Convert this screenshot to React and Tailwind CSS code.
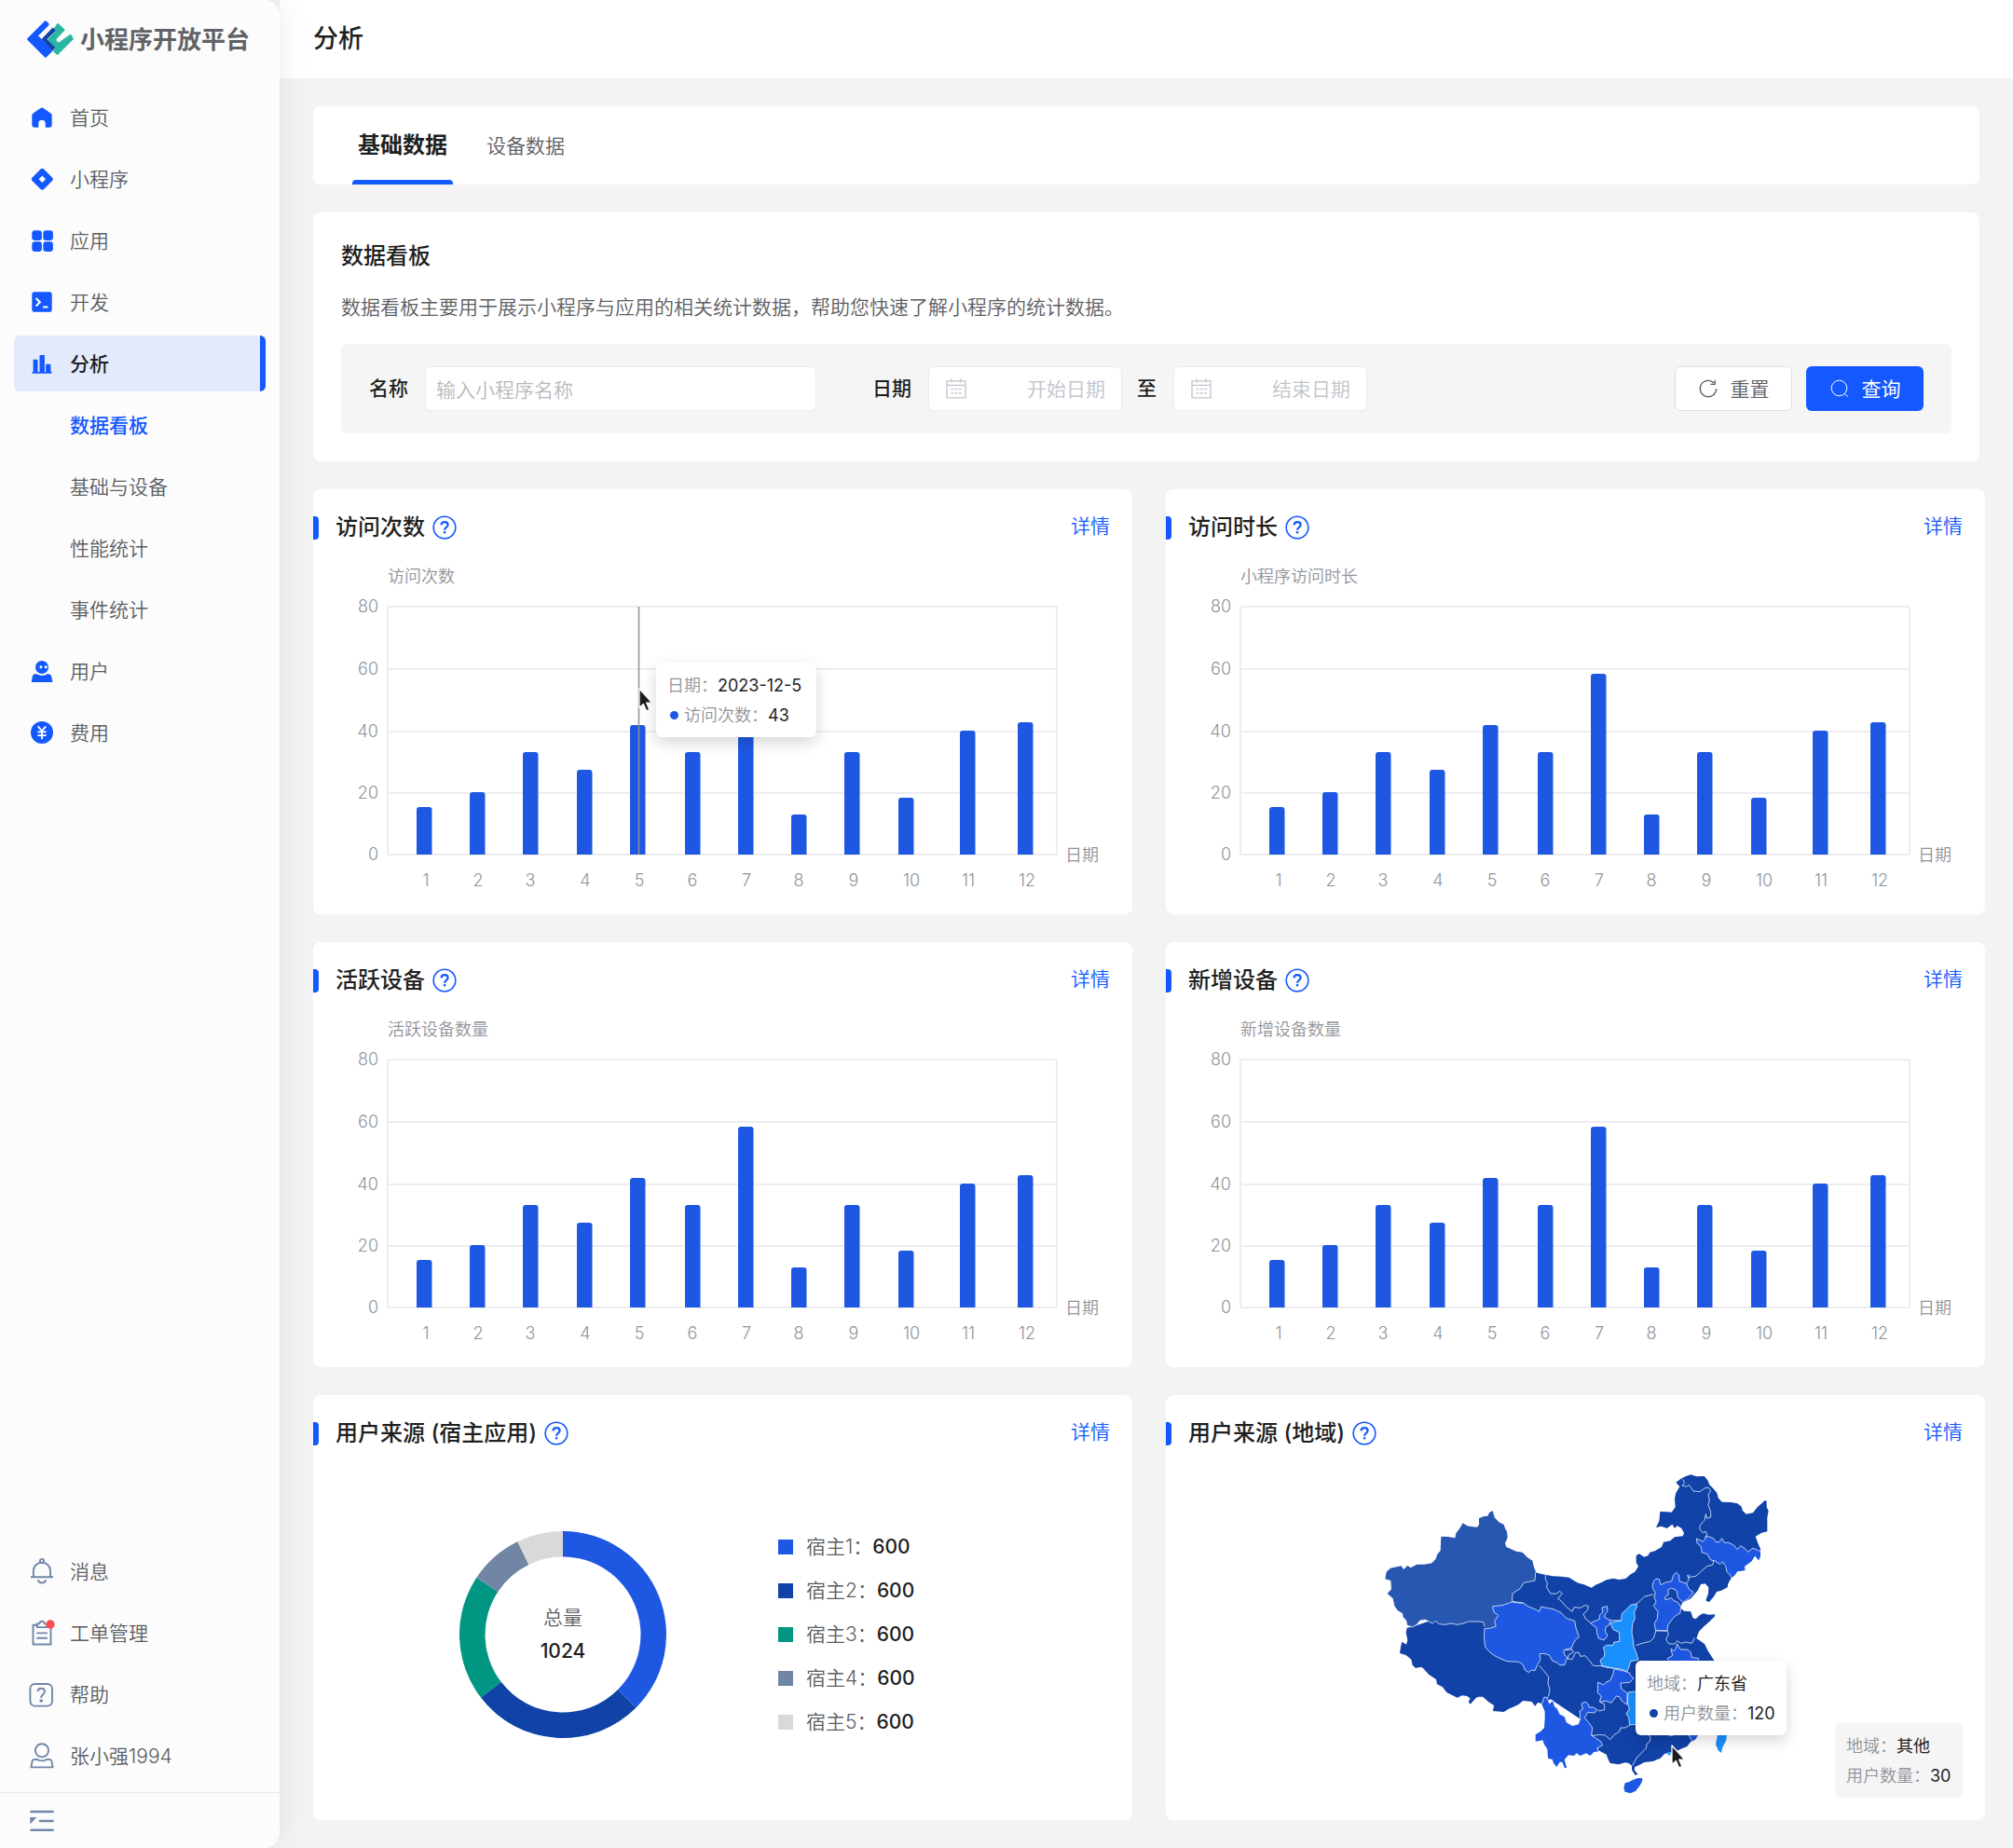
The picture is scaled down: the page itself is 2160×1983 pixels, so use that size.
import React from "react";

const ICONS = {
  home: (
    <path
      fill="currentColor"
      d="M13.6 4.9a2.4 2.4 0 0 1 2.8 0l8 5.7c.8.6 1.3 1.5 1.3 2.5v9.7a2.9 2.9 0 0 1-2.9 2.9h-4.1v-4.2a3.7 3.7 0 0 0-7.4 0v4.2H7.2a2.9 2.9 0 0 1-2.9-2.9v-9.7c0-1 .5-1.9 1.3-2.5z"
    />
  ),
  mini: (
    <path
      fill="currentColor"
      fillRule="evenodd"
      d="M13.3 4.7a2.8 2.8 0 0 1 4 0l8.500 8.500a2.800 2.800 0 0 1 0 4l-8.500 8.500a2.800 2.800 0 0 1-4 0l-8.500-8.500a2.800 2.800 0 0 1 0-4zM15.300 11.500l-3.700 3.700 3.700 3.700 3.700-3.700z"
    />
  ),
  apps: (
    <g fill="currentColor">
      <rect x="4.3" y="4.3" width="10.6" height="10.6" rx="3.2" />
      <rect x="16.3" y="4.3" width="10.6" height="10.6" rx="3.2" />
      <rect x="4.3" y="16.3" width="10.6" height="10.6" rx="3.2" />
      <rect x="16.3" y="16.3" width="10.6" height="10.6" rx="3.2" />
    </g>
  ),
  dev: (
    <g>
      <rect x="4.3" y="4.3" width="21.4" height="21.4" rx="2.8" fill="currentColor" />
      <path d="M8.6 11l4.3 4.3-4.3 4.2M16 20.500h5.400" fill="none" stroke="#fff" strokeWidth="2" />
    </g>
  ),
  chart: (
    <g fill="currentColor">
      <rect x="5.6" y="10.7" width="4.9" height="14" rx="0.8" />
      <rect x="12.5" y="6" width="5.4" height="19" rx="0.8" />
      <rect x="19.1" y="15.7" width="5.3" height="9" rx="0.8" />
      <rect x="4.5" y="24" width="21" height="1.7" rx="0.5" />
    </g>
  ),
  user: (
    <g>
      <circle cx="15" cy="11" r="7" fill="currentColor" />
      <circle cx="13.9" cy="10.7" r="1.5" fill="#fff" />
      <circle cx="19.2" cy="10.7" r="1.5" fill="#fff" />
      <path d="M7.8 18.3h1.7c1.7 1.1 3.5 1.5 5.5 1.5s3.8-.4 5.5-1.5h1.7c1.6 0 2.7.9 3 2.4l1.2 6.3H3.7l1.1-6.3c.3-1.5 1.4-2.4 3-2.4z" fill="currentColor" />
    </g>
  ),
  fee: (
    <g>
      <circle cx="15" cy="15" r="12" fill="currentColor" />
      <path d="M10.8 8.3l4.200 5 4.200-5M15 13.300v9M10.300 14.400h9.400M10.300 18.100h9.400" fill="none" stroke="#fff" strokeWidth="1.8" />
    </g>
  ),
  bell: (
    <g fill="none" stroke="currentColor" strokeWidth="1.9">
      <path d="M3 21.300h24" />
      <path d="M5.9 21.3v-6.8C5.9 9.3 10 5.8 15 5.8s9.1 3.5 9.1 8.7v6.8" />
      <circle cx="15" cy="4" r="2.1" />
      <path d="M10.8 24.2c.5 2 2.1 3.3 4.2 3.3s3.7-1.3 4.2-3.3" />
    </g>
  ),
  ticket: (
    <g>
      <g fill="none" stroke="currentColor" strokeWidth="1.9">
        <path d="M9.300 6.700H5.500v20.800h19V8" />
        <path d="M9.8 5.4h2.4c.3-1.6 1.3-2.7 2.8-2.7s2.5 1.1 2.8 2.7h2.4v3.7H9.800z" />
        <path d="M9.300 15.400h11.700M9.300 20.800h11.700" />
      </g>
      <circle cx="24" cy="6" r="4.7" fill="#ff4d4f" />
    </g>
  ),
  help: (
    <g fill="none" stroke="currentColor" strokeWidth="1.9">
      <rect x="2.4" y="4" width="23.6" height="23.6" rx="5" />
      <path d="M10.5 12.2c.1-2.1 1.5-3.5 3.7-3.5s3.7 1.3 3.7 3.3c0 1.7-1 2.5-2 3.4-1.1.9-1.7 1.6-1.7 3.2v.5" />
      <circle cx="14.2" cy="22" r="0.9" fill="currentColor" />
    </g>
  ),
  person: (
    <g fill="none" stroke="currentColor" strokeWidth="1.9">
      <circle cx="15" cy="9.3" r="7.1" />
      <path d="M3.4 27.4l1.2-6.6c.2-1.2 1-1.8 2.2-1.8h3.1c1.5.9 3.2 1.4 5.1 1.4s3.6-.5 5.1-1.4h3.1c1.2 0 2 .6 2.2 1.8l1.2 6.6z" />
    </g>
  ),
  fold: (
    <g>
      <path d="M3.500 5h23M13 15h13.500M3.500 24.700h23" stroke="currentColor" strokeWidth="2.6" strokeLinecap="round" />
      <path d="M2.300 11h7l-7 7.500z" fill="currentColor" />
    </g>
  ),
};

function Icon({ name }) {
  return (
    <svg viewBox="0 0 30 30" className="h-[30px] w-[30px] shrink-0" aria-hidden="true">
      {ICONS[name]}
    </svg>
  );
}

function NavItem({ icon, label, active, muted }) {
  return (
    <a
      href="#"
      className={
        "relative flex h-[60px] items-center gap-[15px] overflow-hidden rounded-md pl-[15px] text-[21px] " +
        (active ? "bg-[#e3eafc] font-medium text-[#1f1f1f]" : "font-[350] text-[#5b5d63]")
      }
    >
      <span className={muted ? "text-[#7186a8]" : "text-[#1359ff]"}>
        <Icon name={icon} />
      </span>
      <span className="pt-[2px]">{label}</span>
      {active && <span className="absolute inset-y-0 right-0 w-[6px] bg-[#1359ff]" />}
    </a>
  );
}

function SubItem({ label, active }) {
  return (
    <a
      href="#"
      className={
        "flex h-[60px] items-center pt-[2px] pl-[60px] text-[21px] " +
        (active ? "font-medium text-[#1359ff]" : "font-[350] text-[#5b5d63]")
      }
    >
      {label}
    </a>
  );
}

function Logo() {
  return (
    <svg viewBox="84 62 160 132" className="h-[44px] w-[53px]" aria-hidden="true" strokeLinejoin="round">
      <path d="M92 128L147 73l7 7-37 37 48 48-18 18z" fill="#1359ff" stroke="#1359ff" strokeWidth="9" />
      <path d="M187 79l20 19-24 25c-5 5-5 9 0 14s9 5 14 0l31-22 7 12-50 50-11-11 8-8-25-29 27-27-7-9z" fill="#2ab7a2" stroke="#2ab7a2" strokeWidth="5" />
      <path d="M170 90l11 10-29 28 27 28-9 9-36-37z" fill="#1042a8" />
    </svg>
  );
}

function Sidebar() {
  return (
    <aside className="z-10 flex w-[300px] shrink-0 flex-col rounded-r-2xl bg-[#fcfcfc] shadow-[0_0_36px_rgba(0,0,0,0.08)]">
      <div className="flex h-[84px] items-center gap-[5px] pl-7 text-[26px] font-bold text-[#606266]">
        <Logo />
        小程序开放平台
      </div>
      <nav className="flex flex-col gap-[6px] px-[15px] pt-3" aria-label="主导航">
        <NavItem icon="home" label="首页" />
        <NavItem icon="mini" label="小程序" />
        <NavItem icon="apps" label="应用" />
        <NavItem icon="dev" label="开发" />
        <NavItem icon="chart" label="分析" active />
        <SubItem label="数据看板" active />
        <SubItem label="基础与设备" />
        <SubItem label="性能统计" />
        <SubItem label="事件统计" />
        <NavItem icon="user" label="用户" />
        <NavItem icon="fee" label="费用" />
      </nav>
      <nav className="mt-auto flex flex-col gap-[6px] px-[15px] pb-[9px]" aria-label="账户">
        <NavItem icon="bell" label="消息" muted />
        <NavItem icon="ticket" label="工单管理" muted />
        <NavItem icon="help" label="帮助" muted />
        <NavItem icon="person" label="张小强1994" muted />
      </nav>
      <div className="flex h-[60px] items-center border-t border-[#e8e8e8] pl-[30px]">
        <button type="button" aria-label="收起菜单" className="text-[#7186a8]">
          <Icon name="fold" />
        </button>
      </div>
    </aside>
  );
}

function CalendarIcon() {
  return (
    <svg viewBox="0 0 24 24" className="h-6 w-6 shrink-0 text-[#c0c4cc]" fill="none" stroke="currentColor" strokeWidth="1.3" aria-hidden="true">
      <path d="M2 3.800h20v18H2zM2 8.400h20M7 1.500v4M17 1.500v4" />
      <path d="M6.500 12.600h3M10.700 12.600h3M14.900 12.600h3M6.500 16.800h3M10.700 16.800h3M14.900 16.800h3" />
    </svg>
  );
}

function DateField({ label, placeholder }) {
  return (
    <div className="flex h-12 w-[208px] items-center rounded-md border border-[#ebebeb] bg-white px-[17px]">
      <CalendarIcon />
      <input
        type="text"
        aria-label={label}
        placeholder={placeholder}
        className="w-full min-w-0 pt-[2px] text-right text-[21px] font-[350] outline-none placeholder:text-[#c0c4cc]"
      />
    </div>
  );
}

function FilterBar() {
  return (
    <form className="mt-6 flex h-24 items-center rounded-md bg-[#f5f5f5] px-[30px] text-[21px]">
      <label htmlFor="app-name" className="mr-[18px] font-medium text-[#1f1f1f]">
        名称
      </label>
      <input
        id="app-name"
        type="text"
        placeholder="输入小程序名称"
        className="h-12 w-[420px] rounded-md border border-[#ebebeb] bg-white px-[11px] pt-[2px] font-[350] outline-none placeholder:text-[#b8b8b8]"
      />
      <span className="mr-[18px] ml-[60px] font-medium text-[#1f1f1f]">日期</span>
      <DateField label="开始日期" placeholder="开始日期" />
      <span className="mr-[18px] ml-4 font-medium text-[#1f1f1f]">至</span>
      <DateField label="结束日期" placeholder="结束日期" />
      <button
        type="button"
        className="ml-auto flex h-12 w-[126px] items-center justify-center gap-[13px] rounded-md border border-[#dcdfe6] bg-white font-[350] text-[#5b5d63]"
      >
        <svg viewBox="0 0 22 22" className="h-[22px] w-[22px]" fill="none" stroke="currentColor" strokeWidth="1.3" aria-hidden="true">
          <path d="M19.600 11a8.700 8.700 0 1 1-2.400-6" />
          <path d="M18.200 1.800v4.600h-4.800" />
        </svg>
        <span className="pt-[2px]">重置</span>
      </button>
      <button
        type="button"
        className="ml-[15px] flex h-12 w-[126px] items-center justify-center gap-[13px] rounded-md bg-[#1359ff] text-white"
      >
        <svg viewBox="0 0 22 22" className="h-[22px] w-[22px]" fill="none" stroke="currentColor" strokeWidth="1" aria-hidden="true">
          <circle cx="10.5" cy="10.5" r="8.3" />
          <path d="M16.300 16.300l3.500 3.500" />
        </svg>
        <span className="pt-[2px]">查询</span>
      </button>
    </form>
  );
}

function Card({ title, children }) {
  return (
    <section className="relative rounded-lg bg-white">
      <header className="flex h-[82px] items-center pr-6">
        <span className="h-[25px] w-[6px] rounded-r bg-[#1359ff]" />
        <h2 className="ml-[18px] text-2xl font-medium text-[#1f1f1f]">{title}</h2>
        <button type="button" aria-label={title + "说明"} className="ml-2 text-[#1359ff]">
          <svg viewBox="0 0 26 26" className="block h-[26px] w-[26px]" fill="none" aria-hidden="true">
            <circle cx="13" cy="13" r="11.8" stroke="currentColor" strokeWidth="1.6" />
            <path d="M9.5 10.4c.1-2.1 1.5-3.3 3.6-3.3s3.5 1.2 3.5 3c0 1.4-.7 2.1-1.7 2.8-1.2.8-1.8 1.4-1.8 2.9" stroke="currentColor" strokeWidth="2.2" />
            <rect x="11.9" y="17" width="2.4" height="2.4" rx="0.6" fill="currentColor" />
          </svg>
        </button>
        <a href="#" className="ml-auto pb-[2px] text-[21px] font-[350] text-[#1359ff]">
          详情
        </a>
      </header>
      {children}
    </section>
  );
}

const BARS = [
  { x: 111, h: 51, label: "1", lx: 121 },
  { x: 168, h: 67, label: "2", lx: 177 },
  { x: 225, h: 110, label: "3", lx: 233 },
  { x: 283, h: 91, label: "4", lx: 292 },
  { x: 340, h: 139, label: "5", lx: 350 },
  { x: 399, h: 110, label: "6", lx: 407 },
  { x: 456, h: 194, label: "7", lx: 465 },
  { x: 513, h: 43, label: "8", lx: 521 },
  { x: 570, h: 110, label: "9", lx: 580 },
  { x: 628, h: 61, label: "10", lx: 642 },
  { x: 694, h: 133, label: "11", lx: 703 },
  { x: 756, h: 142, label: "12", lx: 766 },
];

const TICKS = [
  { value: 80, y: 126 },
  { value: 60, y: 193 },
  { value: 40, y: 260 },
  { value: 20, y: 326 },
  { value: 0, y: 392 },
];

function BarChart({ name, pointer }) {
  return (
    <svg viewBox="0 82 879 374" className="block w-full text-[18px] font-[350]" role="img" aria-label={name}>
      <g fill="#909399">
        <text x="80" y="100">{name}</text>
        {TICKS.map((t) => (
          <text key={t.value} x="70" y={t.y + 6} textAnchor="end">
            {t.value}
          </text>
        ))}
        {BARS.map((b) => (
          <text key={b.label} x={b.lx} y="426" textAnchor="middle">
            {b.label}
          </text>
        ))}
        <text x="807" y="399">日期</text>
      </g>
      <g stroke="#ededef" strokeWidth="2">
        {TICKS.map((t) => (
          <path key={t.value} d={`M80 ${t.y}H798`} />
        ))}
        <path d="M80 126V392M798 126V392" />
      </g>
      {BARS.map((b) => (
        <path
          key={b.label}
          d={`M${b.x} 392V${392 - b.h + 3}q0-3 3-3h10.500q3 0 3 3V392z`}
          fill="#1e58e2"
        />
      ))}
      {pointer && <path d="M349.500 126V392" stroke="#8b8e95" strokeWidth="1.5" />}
    </svg>
  );
}

function Cursor() {
  return (
    <svg viewBox="0 0 18 28" className="h-7 w-[18px]" aria-hidden="true">
      <path d="M2 2v20.500l4.400-4 3.200 7.300 3.300-1.400-3.200-7.200h6.100z" fill="#1b1c1e" stroke="#fff" strokeWidth="1.3" strokeLinejoin="round" />
    </svg>
  );
}

function TipRows({ rows }) {
  return (
    <dl className="flex flex-col gap-1">
      {rows.map((r) => (
        <div key={r.name} className="flex h-7 items-center">
          {r.dot && (
            <span className={"mr-[6px] ml-[3px] h-[9px] w-[9px] rounded-full " + r.dot} />
          )}
          <dt className="font-[350] text-[#909399]">{r.name}：</dt>
          <dd className="font-normal text-[#1f1f1f]">{r.value}</dd>
        </div>
      ))}
    </dl>
  );
}

const SOURCES = [
  { name: "宿主1", from: 0, to: 135, fill: "#1e58e2", swatch: "bg-[#1e58e2]" },
  { name: "宿主2", from: 135, to: 232.5, fill: "#1042a8", swatch: "bg-[#1042a8]" },
  { name: "宿主3", from: 232.5, to: 303.5, fill: "#009682", swatch: "bg-[#009682]" },
  { name: "宿主4", from: 303.5, to: 334, fill: "#7186a5", swatch: "bg-[#7186a5]" },
  { name: "宿主5", from: 334, to: 360, fill: "#d9d9d9", swatch: "bg-[#d9d9d9]" },
];

function ringPath(from, to) {
  const at = (deg, r) => {
    const a = (deg * Math.PI) / 180;
    return `${(112 + r * Math.sin(a)).toFixed(2)} ${(112 - r * Math.cos(a)).toFixed(2)}`;
  };
  return `M${at(from, 111)}A111 111 0 0 1 ${at(to, 111)}L${at(to, 83.5)}A83.5 83.5 0 0 0 ${at(from, 83.5)}z`;
}

function SourceChart() {
  return (
    <div className="flex h-[374px] items-center pb-[25px] pl-[156px]">
      <div className="relative h-56 w-56">
        <svg viewBox="0 0 224 224" className="h-full w-full" role="img" aria-label="用户来源分布">
          {SOURCES.map((s) => (
            <path key={s.name} d={ringPath(s.from, s.to)} fill={s.fill} />
          ))}
        </svg>
        <div className="absolute inset-0 flex flex-col items-center justify-center gap-1 text-[21px] leading-8">
          <span className="font-[350] text-[#5b5d63]">总量</span>
          <span className="font-medium text-[#1f1f1f]">1024</span>
        </div>
      </div>
      <ul className="ml-[119px] flex flex-col gap-[15px] text-[21px]">
        {SOURCES.map((s) => (
          <li key={s.name} className="flex h-8 items-center">
            <span className={"mr-[14px] h-4 w-4 " + s.swatch} />
            <span className="font-[350] text-[#5b5d63]">{s.name}：</span>
            <span className="font-medium text-[#1f1f1f]">600</span>
          </li>
        ))}
      </ul>
    </div>
  );
}

const MAINLAND =
  "M562 382L578 386 600 391 618 394 645 395 670 398 685 408 700 416 718 421 742 431 758 421 775 414 790 406 812 401 830 405 852 402 868 388 882 380 893 362 886 350 886 328 895 322 912 332 924 328 930 317 948 312 968 300 974 284 996 280 1010 268 1036 265 1040 255 1032 240 1018 232 1010 240 1002 227 985 240 966 233 950 238 960 216 963 186 985 187 1000 188 1012 172 1010 145 1014 125 1026 106 1014 92 1030 80 1046 72 1062 67 1080 73 1105 72 1116 85 1122 100 1134 112 1146 126 1150 142 1162 155 1190 156 1212 160 1225 170 1228 182 1240 194 1262 190 1276 172 1290 160 1300 150 1306 152 1306 172 1312 184 1308 205 1308 250 1290 254 1270 266 1278 288 1286 306 1286 330 1280 342 1268 328 1258 345 1235 362 1236 375 1212 378 1202 392 1193 398 1182 418 1180 430 1160 440 1145 444 1136 460 1120 478 1110 472 1118 450 1119 430 1108 418 1094 420 1084 440 1062 466 1034 480 1028 496 1040 506 1062 508 1068 528 1078 532 1090 520 1102 514 1120 518 1140 517 1138 524 1118 544 1104 556 1088 572 1080 594 1092 602 1106 612 1118 636 1136 664 1150 700 1160 760 1140 820 1110 880 1085 905 1076 920 1062 926 1050 942 1030 950 1010 960 990 963 978 965 964 980 940 990 912 993 900 1000 882 1008 880 1018 891 1031 883 1035 872 1018 872 1004 862 996 850 994 830 1000 802 996 796 984 790 968 765 955 730 870 610 790 586 806 570 800 560 812 550 798 522 795 506 808 490 815 478 820 460 831 425 828 428 810 410 798 392 782 378 782 370 786 352 806 346 798 352 788 342 780 326 778 310 785 292 776 276 768 262 750 245 742 242 726 218 710 200 690 193 686 176 690 166 680 162 662 145 648 125 642 128 622 132 605 146 614 150 600 145 576 148 560 165 557 420 470z";

const XINJIANG =
  "M78 403L82 380 95 368 130 361 137 372 150 360 160 367 180 356 205 356 228 352 240 340 247 322 256 312 258 266 280 267 303 271 306 256 318 240 328 223 342 232 358 235 374 236 380 228 380 208 394 202 408 200 414 188 424 184 430 205 444 220 460 228 465 242 470 250 472 270 464 288 468 300 482 306 500 314 520 317 536 334 552 344 556 362 563 380 560 408 542 410 525 415 512 434 500 442 488 450 486 475 470 482 455 490 440 489 423 492 428 510 442 518 430 535 435 555 422 558 412 562 398 556 394 542 378 540 345 540 330 546 310 550 290 546 272 550 252 548 240 538 232 546 218 540 208 534 190 537 180 550 165 558 150 552 146 536 136 526 134 514 118 504 108 490 103 466 85 450 98 436 96 408z";

const ROYAL = [
  "M423 492L440 489 455 488 486 477 505 480 522 480 540 492 560 500 574 508 580 492 598 496 620 500 645 512 652 520 662 530 688 538 692 560 702 590 690 600 682 614 678 626 664 628 652 634 656 648 664 656 655 680 640 680 630 672 616 666 606 648 590 643 575 644 578 662 568 680 560 698 550 696 540 704 528 696 522 680 508 670 470 668 450 660 430 650 412 636 400 622 396 590 398 562 415 562 435 555 430 540 442 520 428 510z",
  "M776 495L792 491 794 508 786 516 784 526 803 536 800 550 788 558 786 570 794 586 782 600 765 594 760 578 758 560 738 545 768 532 768 520 778 510z",
  "M942 410L950 402 960 404 965 422 980 414 1000 410 1006 390 1015 382 1024 390 1025 410 1048 418 1056 436 1070 446 1056 464 1036 478 1020 462 1016 440 1000 432 988 438 990 454 978 462 980 470 1000 464 1006 472 1020 478 1030 492 1028 512 1012 522 1000 535 988 552 986 570 948 568 945 545 954 530 956 508 942 490 950 476 944 462 948 448 938 430z",
  "M1080 273L1100 282 1108 276 1110 265 1124 268 1135 272 1142 284 1154 284 1162 272 1170 286 1184 286 1200 294 1212 308 1222 296 1235 304 1245 316 1262 304 1286 314 1286 330 1280 342 1268 328 1258 345 1235 362 1236 375 1212 378 1202 392 1193 398 1186 388 1178 380 1174 362 1164 348 1156 356 1138 344 1126 342 1114 322 1098 318 1094 298 1082 288z",
  "M1018 612L1028 630 1052 630 1062 640 1064 656 1087 658 1087 700 990 700 988 658 1003 650 998 628 1008 634 1014 626z",
  "M815 692L850 700 866 706 868 714 878 722 866 736 836 738 838 756 857 770 857 808 840 796 832 782 822 780 806 802 790 796 768 798 774 780 762 770 763 735 780 744 788 736 802 730 812 708z",
  "M590 783L600 786 607 804 618 794 624 814 632 820 640 838 656 846 662 864 680 875 700 870 706 852 704 828 714 822 710 804 722 798 732 806 735 816 750 816 758 826 752 834 730 832 720 850 734 866 745 882 742 906 756 916 772 926 778 938 760 948 766 958 750 960 738 972 725 964 706 972 694 964 686 972 668 970 655 985 663 1012 655 1010 648 992 640 992 630 1008 620 996 616 984 602 980 600 950 590 936 585 922 562 926 562 904 578 894 590 882 592 850 592 830 582 806z",
  "M875 1050L890 1044 905 1044 906 1052 898 1068 885 1085 868 1093 850 1088 846 1076 850 1060 864 1056z",
  "M1050 895L1085 905 1076 918 1065 925z",
];

const AZURE = [
  "M868 487L887 483 888 492 880 510 882 530 874 548 872 575 876 600 878 620 886 640 893 663 868 668 864 684 856 702 842 694 812 690 794 688 776 683 770 664 784 652 784 634 780 624 790 616 812 616 814 606 832 604 832 575 812 566 803 546 816 540 838 537 840 514 854 502z",
  "M860 768L890 764V872H865L862 850 854 836 864 822 858 800z",
  "M1150 895L1178 900 1176 922 1164 945 1160 963 1150 955 1142 935z",
];

const BORDERS = [
  "M562 382L560 408 525 415 512 434 488 450 486 475 522 480",
  "M594 390L594 404 600 416 598 430 610 450 630 450 640 442 648 450 634 466 645 474 660 492 680 508 686 494 706 496 720 488 732 490 730 502 716 516 722 530 738 543",
  "M803 536L838 537",
  "M887 483L900 472 912 460 942 452M885 617L905 610 930 604 942 594 949 570 986 570 990 580 982 598 992 612 1010 612 1018 602 1030 610 1046 606 1066 610 1074 592",
  "M1058 388L1054 400 1062 396 1078 394 1100 374 1114 362 1132 358 1136 343M1048 418L1056 404 1050 390",
  "M1036 82L1042 94 1034 102 1048 106 1056 100 1070 120 1092 122 1104 112 1118 108 1126 118 1118 132 1122 150 1118 164 1126 188 1126 204 1114 208 1110 194 1106 214 1092 230 1090 240 1100 254 1110 250 1114 262 1108 270",
  "M655 632L680 630 684 638 668 648 666 660 680 662 690 640 702 640 706 652 722 650 734 664 748 682 776 683",
  "M574 682L590 700 604 718 602 738 608 760 604 780 596 786",
  "M770 800L784 806 784 824 766 828 758 820M745 908L766 904 786 906 802 920 816 904 832 894 836 882 850 882 868 872M890 870L912 880 918 896 932 912 930 926 920 934 918 948 900 966 888 978 880 992 874 1004",
  "M985 904L1000 908 1012 902M1030 900L1056 906 1064 922",
  "M776 683L812 690",
];

function RegionMap() {
  return (
    <svg viewBox="2 57 1380 1122" className="mx-auto block h-[374px] w-[460px]" role="img" aria-label="用户地域分布图" strokeLinejoin="round">
      <path d={MAINLAND} fill="#1042a8" />
      <path d={XINJIANG} fill="#2857b1" />
      {ROYAL.map((d) => (
        <path key={d} d={d} fill="#1e58e2" />
      ))}
      {AZURE.map((d) => (
        <path key={d} d={d} fill="#1a90ff" />
      ))}
      <g fill="none" stroke="#dfe8fa" strokeWidth="2.5">
        {BORDERS.map((d) => (
          <path key={d} d={d} />
        ))}
        {ROYAL.slice(0, 3).map((d) => (
          <path key={d} d={d} />
        ))}
        <path d={ROYAL[5]} />
        <path d={AZURE[0]} />
        <path d={AZURE[1]} />
        <path d="M1193 398L1186 388 1178 380 1174 362 1164 348 1156 356 1138 344 1126 342 1114 322 1098 318 1094 298 1082 288 1080 273 1100 282 1108 276 1110 265 1124 268 1135 272 1142 284 1154 284 1162 272 1170 286 1184 286 1200 294 1212 308 1222 296 1235 304 1245 316 1262 304 1286 314" />
        <path d="M988 664V658L1003 650 998 628 1008 634 1014 626 1018 612 1028 630 1052 630 1062 640 1064 656 1087 658V664" />
        <path d="M582 806L590 783 600 786 607 804 618 794 624 814 632 820 640 838 656 846 662 864 680 875 700 870 706 852 704 828 714 822 710 804 722 798 732 806 735 816 750 816 758 826 752 834 730 832 720 850 734 866 745 882 742 906 756 916 772 926 778 938 760 948 766 958" />
        <path d="M148 552L165 558 180 550 190 537 208 534 218 540 232 546 240 538 252 548 272 550 290 546 310 550 330 546 345 540 378 540 394 542 398 556" />
      </g>
      <circle cx="992" cy="965" r="6" fill="#35b0ff" />
    </svg>
  );
}

export default function App() {
  return (
    <div className="flex min-h-screen bg-[#f3f3f3] font-['Inter','Noto_Sans_CJK_SC',sans-serif]" lang="zh-CN">
      <Sidebar />
      <div className="flex min-w-0 flex-1 flex-col">
        <header className="flex h-[84px] items-center bg-white pl-9">
          <h1 className="text-[27px] font-medium text-[#1f1f1f]">分析</h1>
        </header>
        <main className="flex flex-col gap-[30px] py-[30px] pr-[30px] pl-9">
          <div className="mr-[6px] flex h-[84px] gap-9 rounded-lg bg-white pl-[42px]" role="tablist">
            <button
              type="button"
              role="tab"
              aria-selected="true"
              className="relative px-[6px] text-2xl font-bold text-[#1f1f1f]"
            >
              基础数据
              <span className="absolute inset-x-0 bottom-0 h-[5px] rounded-t bg-[#1359ff]" />
            </button>
            <button type="button" role="tab" aria-selected="false" className="pt-[2px] text-[21px] font-[350] text-[#5b5d63]">
              设备数据
            </button>
          </div>

          <section className="mr-[6px] rounded-lg bg-white p-[30px]">
            <h2 className="text-2xl leading-[34px] font-medium text-[#1f1f1f]">数据看板</h2>
            <p className="mt-[23px] text-[21px] leading-[30px] font-[350] text-[#5b5d63]">
              数据看板主要用于展示小程序与应用的相关统计数据，帮助您快速了解小程序的统计数据。
            </p>
            <FilterBar />
          </section>

          <div className="grid grid-cols-2 gap-x-9 gap-y-[30px]">
            <Card title="访问次数">
              <BarChart name="访问次数" pointer />
              <div className="absolute top-[212px] left-[348px]">
                <Cursor />
              </div>
              <div className="absolute top-[186px] left-[368px] h-20 min-w-[172px] rounded-md bg-white px-3 pt-[10px] text-[18px] whitespace-nowrap shadow-[0_6px_16px_rgba(0,0,0,0.16)]">
                <TipRows
                  rows={[
                    { name: "日期", value: "2023-12-5" },
                    { name: "访问次数", value: "43", dot: "bg-[#1e58e2]" },
                  ]}
                />
              </div>
            </Card>
            <Card title="访问时长">
              <BarChart name="小程序访问时长" />
            </Card>
            <Card title="活跃设备">
              <BarChart name="活跃设备数量" />
            </Card>
            <Card title="新增设备">
              <BarChart name="新增设备数量" />
            </Card>
            <Card title="用户来源 (宿主应用)">
              <SourceChart />
            </Card>
            <Card title="用户来源 (地域)">
              <RegionMap />
              <div className="absolute top-[285px] left-[504px] h-20 min-w-[162px] rounded-md bg-white px-3 pt-[10px] text-[18px] whitespace-nowrap shadow-[0_6px_16px_rgba(0,0,0,0.16)]">
                <TipRows
                  rows={[
                    { name: "地域", value: "广东省" },
                    { name: "用户数量", value: "120", dot: "bg-[#1042a8]" },
                  ]}
                />
              </div>
              <div className="absolute top-[374px] left-[541px]">
                <Cursor />
              </div>
              <div className="absolute right-6 bottom-6 h-20 min-w-[137px] rounded-md bg-[#f5f5f5] px-3 pt-[10px] text-[18px] whitespace-nowrap">
                <TipRows
                  rows={[
                    { name: "地域", value: "其他" },
                    { name: "用户数量", value: "30" },
                  ]}
                />
              </div>
            </Card>
          </div>
        </main>
      </div>
    </div>
  );
}
